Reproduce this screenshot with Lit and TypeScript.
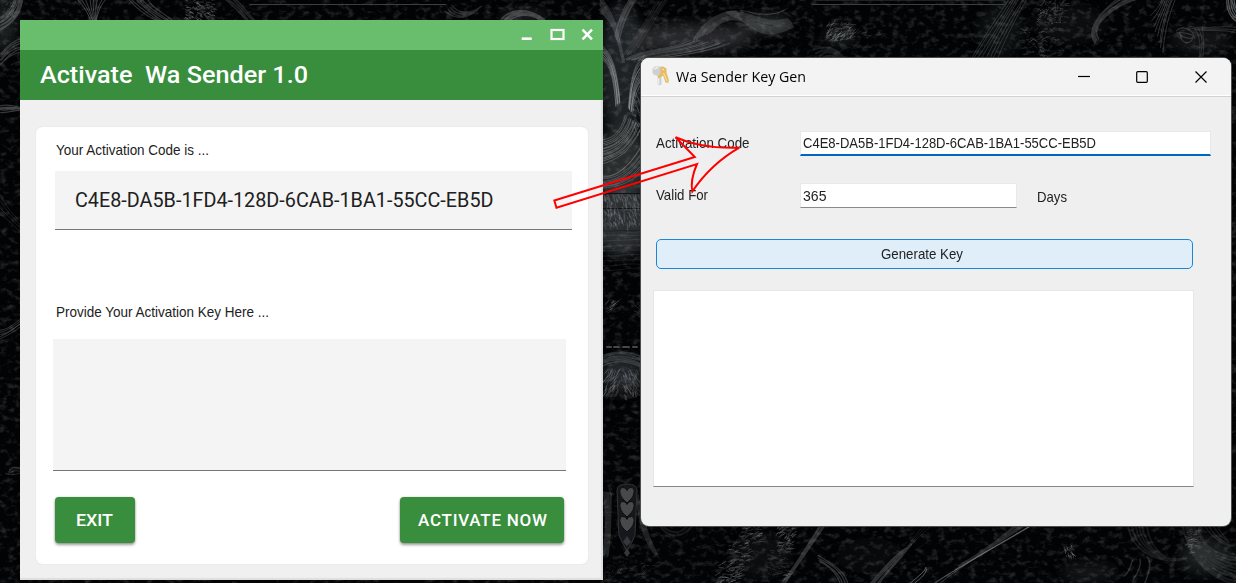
import { LitElement, html, svg, css } from "lit";
import { customElement, property } from "lit/decorators.js";

type Curve = number[];
interface Bundle { a: Curve; b: Curve; n: number; w: number; o: number; }
interface Tuft { x: number; y: number; w: number; h: number; n: number; angle: number; spread: number; len: number; o: number; }

const bundles: Bundle[] = [
  { a: [0, 30, 14, 24, 22, 12, 23, -4], b: [0, 18, 8, 14, 14, 6, 15, -4], n: 8, w: 1.2, o: 0.3 },
  { a: [0, 54, 8, 44, 14, 40, 22, 38], b: [0, 66, 8, 56, 14, 54, 22, 52], n: 6, w: 1.3, o: 0.26 },
  { a: [0, 106, 8, 104, 14, 105, 22, 107], b: [0, 112, 8, 112, 14, 110, 22, 110], n: 5, w: 1.2, o: 0.3 },
  { a: [0, 195, 8, 210, 14, 216, 22, 222], b: [0, 214, 8, 220, 14, 226, 22, 234], n: 4, w: 1, o: 0.14 },
  { a: [0, 330, 8, 330, 14, 324, 22, 318], b: [0, 338, 8, 336, 14, 332, 22, 326], n: 5, w: 1, o: 0.26 },
  { a: [8, 472, 10, 466, 16, 466, 22, 470], b: [6, 474, 12, 476, 16, 474, 22, 473], n: 3, w: 1, o: 0.22 },
  { a: [76, -2, 82, 4, 88, 12, 92, 22], b: [108, -2, 100, 5, 98, 10, 96, 22], n: 8, w: 0.8, o: 0.42 },
  { a: [126, -2, 136, 6, 142, 14, 158, 22], b: [146, -2, 150, 8, 162, 12, 174, 22], n: 6, w: 1.2, o: 0.26 },
  { a: [222, -2, 232, 4, 240, 14, 248, 22], b: [234, -2, 244, 6, 248, 14, 256, 22], n: 4, w: 1.6, o: 0.18 },
  { a: [446, 12, 456, 20, 468, 18, 476, 10], b: [452, 6, 460, 16, 472, 14, 482, 6], n: 4, w: 1.4, o: 0.2 },
  { a: [502, 20, 512, 8, 528, 8, 544, 20], b: [508, 20, 518, 13, 528, 13, 540, 20], n: 5, w: 1.6, o: 0.3 },
  { a: [600, 12, 610, 22, 616, 28, 622, 62], b: [600, -4, 612, 10, 618, 26, 624, 62], n: 9, w: 1.2, o: 0.2 },
  { a: [630, -2, 622, 10, 617, 24, 614, 36], b: [637, -2, 628, 12, 622, 24, 618, 42], n: 6, w: 1.1, o: 0.26 },
  { a: [600, 44, 612, 52, 618, 70, 620, 102], b: [600, 58, 608, 60, 614, 76, 616, 106], n: 11, w: 1, o: 0.3 },
  { a: [644, 56, 634, 64, 630, 80, 628, 108], b: [644, 80, 638, 86, 634, 94, 632, 112], n: 11, w: 1, o: 0.33 },
  { a: [600, 164, 620, 160, 634, 148, 643, 126], b: [600, 140, 614, 140, 622, 130, 626, 116], n: 13, w: 0.9, o: 0.36 },
  { a: [600, 176, 618, 178, 632, 162, 643, 142], b: [600, 189, 620, 188, 632, 182, 643, 170], n: 9, w: 0.9, o: 0.32 },
  { a: [600, 232, 612, 228, 630, 234, 643, 230], b: [600, 270, 614, 274, 630, 264, 643, 270], n: 9, w: 1.2, o: 0.1 },
  { a: [603, 356, 614, 350, 630, 352, 643, 357], b: [603, 366, 614, 359, 630, 361, 643, 368], n: 6, w: 1.7, o: 0.22 },
  { a: [604, 492, 606, 510, 606, 532, 602, 554], b: [612, 494, 611, 514, 611, 532, 607, 555], n: 6, w: 1.6, o: 0.18 },
  { a: [636, 492, 636, 514, 642, 540, 654, 554], b: [644, 510, 644, 524, 650, 540, 658, 554], n: 6, w: 1.5, o: 0.17 },
  { a: [694, 40, 702, 24, 716, 12, 736, 12], b: [712, 30, 718, 22, 730, 17, 742, 20], n: 8, w: 1.8, o: 0.2 },
  { a: [726, 12, 750, 10, 762, 26, 788, 20], b: [736, 17, 754, 26, 762, 42, 792, 26], n: 8, w: 2.2, o: 0.18 },
  { a: [742, 11, 756, 14, 776, 16, 786, 9], b: [748, 12, 760, 18, 780, 15, 788, 8], n: 2, w: 1, o: 0.18 },
  { a: [624, 60, 644, 48, 670, 50, 690, 40], b: [644, 60, 672, 56, 704, 54, 728, 44], n: 13, w: 0.9, o: 0.24 },
  { a: [622, 56, 636, 36, 646, 24, 656, 4], b: [634, 52, 646, 36, 654, 18, 668, 0], n: 6, w: 1.1, o: 0.13 },
  { a: [814, 50, 830, 44, 838, 50, 844, 58], b: [822, 58, 828, 52, 836, 56, 840, 60], n: 4, w: 2, o: 0.14 },
  { a: [970, 60, 984, 36, 1000, 14, 1010, -2], b: [996, 60, 1004, 42, 1014, 20, 1028, -2], n: 8, w: 1, o: 0.22 },
  { a: [1094, 44, 1086, 30, 1096, 14, 1120, -2], b: [1099, 38, 1090, 26, 1112, 6, 1140, -2], n: 6, w: 1.2, o: 0.24 },
  { a: [1150, 16, 1156, 10, 1160, 6, 1162, -2], b: [1163, 52, 1164, 32, 1168, 14, 1176, -2], n: 8, w: 0.8, o: 0.32 },
  { a: [1176, 30, 1182, 24, 1194, 30, 1194, 38], b: [1180, 36, 1182, 46, 1194, 44, 1192, 36], n: 4, w: 1.2, o: 0.22 },
  { a: [1190, 27, 1204, 30, 1210, 26, 1236, 28], b: [1194, 30, 1206, 32, 1216, 28, 1236, 32], n: 3, w: 1.2, o: 0.2 },
  { a: [1198, 60, 1202, 44, 1200, 36, 1196, 28], b: [1202, 60, 1204, 46, 1204, 34, 1202, 28], n: 3, w: 1, o: 0.18 },
  { a: [1226, 0, 1227, 10, 1230, 18, 1238, 22], b: [1234, -2, 1234, 6, 1236, 10, 1240, 14], n: 5, w: 1.3, o: 0.44 },
  { a: [664, 526, 672, 534, 680, 534, 688, 524], b: [658, 524, 666, 540, 684, 540, 694, 524], n: 4, w: 1.1, o: 0.12 },
  { a: [786, 584, 800, 562, 812, 546, 826, 524], b: [782, 584, 796, 564, 808, 544, 820, 524], n: 4, w: 1.3, o: 0.26 },
  { a: [820, 562, 832, 568, 838, 576, 840, 586], b: [818, 556, 836, 566, 846, 572, 848, 586], n: 4, w: 1.2, o: 0.26 },
  { a: [868, 586, 886, 564, 898, 552, 908, 546], b: [878, 586, 892, 566, 906, 554, 912, 544], n: 5, w: 1.4, o: 0.25 },
  { a: [908, 546, 914, 538, 918, 532, 924, 524], b: [912, 544, 920, 536, 926, 530, 934, 524], n: 3, w: 1, o: 0.12 },
  { a: [930, 586, 962, 564, 1000, 544, 1034, 524], b: [940, 582, 970, 560, 1004, 542, 1032, 524], n: 3, w: 1, o: 0.3 },
  { a: [956, 570, 976, 558, 1000, 540, 1026, 524], b: [962, 564, 978, 556, 1000, 538, 1018, 524], n: 4, w: 1.6, o: 0.2 },
  { a: [926, 568, 924, 574, 916, 578, 908, 586], b: [927, 569, 925, 576, 918, 580, 911, 586], n: 2, w: 0.9, o: 0.55 },
  { a: [1128, 524, 1132, 554, 1160, 564, 1186, 558], b: [1146, 524, 1148, 544, 1160, 560, 1180, 560], n: 6, w: 1.8, o: 0.12 },
  { a: [1183, 524, 1188, 556, 1206, 578, 1240, 586], b: [1200, 524, 1198, 546, 1218, 556, 1240, 558], n: 9, w: 2.2, o: 0.12 },
  { a: [1204, 524, 1208, 534, 1220, 544, 1230, 546], b: [1218, 524, 1218, 532, 1226, 536, 1228, 542], n: 4, w: 1.2, o: 0.14 },
  { a: [1144, 584, 1150, 570, 1152, 562, 1148, 558], b: [1124, 576, 1130, 572, 1130, 564, 1133, 560], n: 3, w: 1.5, o: 0.22 },
];

const tufts: Tuft[] = [
  { x: 184, y: 0, w: 30, h: 20, n: 90, angle: 20, spread: 60, len: 3, o: 0.38 },
  { x: 2, y: 4, w: 12, h: 14, n: 28, angle: -40, spread: 50, len: 2, o: 0.3 },
  { x: 603, y: 194, w: 40, h: 30, n: 130, angle: 76, spread: 34, len: 5, o: 0.3 },
  { x: 632, y: 92, w: 9, h: 40, n: 40, angle: 66, spread: 50, len: 4, o: 0.3 },
  { x: 605, y: 300, w: 10, h: 14, n: 18, angle: -38, spread: 30, len: 6, o: 0.26 },
  { x: 634, y: 300, w: 9, h: 16, n: 18, angle: 42, spread: 30, len: 6, o: 0.26 },
  { x: 605, y: 368, w: 16, h: 24, n: 50, angle: 122, spread: 36, len: 6, o: 0.3 },
  { x: 621, y: 368, w: 20, h: 28, n: 54, angle: 68, spread: 36, len: 6, o: 0.3 },
  { x: 826, y: 24, w: 26, h: 18, n: 80, angle: -32, spread: 70, len: 4.5, o: 0.32 },
  { x: 850, y: 26, w: 32, h: 12, n: 16, angle: -20, spread: 60, len: 4, o: 0.22 },
  { x: 1036, y: 2, w: 30, h: 22, n: 80, angle: -30, spread: 120, len: 3.5, o: 0.28 },
  { x: 1020, y: 28, w: 42, h: 28, n: 80, angle: -10, spread: 110, len: 3.5, o: 0.26 },
  { x: 740, y: 526, w: 20, h: 18, n: 34, angle: -12, spread: 40, len: 4, o: 0.32 },
  { x: 728, y: 542, w: 22, h: 20, n: 40, angle: -12, spread: 50, len: 4, o: 0.34 },
  { x: 714, y: 562, w: 26, h: 22, n: 56, angle: -12, spread: 50, len: 4, o: 0.38 },
  { x: 776, y: 526, w: 18, h: 24, n: 60, angle: -20, spread: 90, len: 4, o: 0.34 },
  { x: 766, y: 546, w: 22, h: 36, n: 46, angle: 6, spread: 50, len: 4, o: 0.24 },
  { x: 1064, y: 544, w: 10, h: 12, n: 26, angle: 70, spread: 60, len: 3, o: 0.36 },
  { x: 1184, y: 530, w: 14, h: 24, n: 44, angle: -12, spread: 50, len: 3.5, o: 0.28 },
  { x: 603, y: 562, w: 50, h: 20, n: 70, angle: -20, spread: 100, len: 4, o: 0.14 },
];

let seed = 7;
const rnd = () => (seed = (seed * 16807) % 2147483647) / 2147483647;

const bundlePath = ({ a, b, n }: Bundle) =>
  Array.from({ length: n }, (_, i) => {
    const t = n > 1 ? i / (n - 1) : 0;
    const p = a.map((v, k) => (v + (b[k] - v) * t + (rnd() - 0.5) * 1.8).toFixed(1));
    return `M${p[0]} ${p[1]}C${p.slice(2).join(" ")}`;
  }).join("");

const tuftPath = (t: Tuft) =>
  Array.from({ length: t.n }, () => {
    const x = t.x + rnd() * t.w;
    const y = t.y + rnd() * t.h;
    const r = ((t.angle + (rnd() - 0.5) * t.spread) * Math.PI) / 180;
    const l = t.len * (0.4 + rnd());
    return `M${x.toFixed(1)} ${y.toFixed(1)}q${(Math.cos(r) * l * 0.5 + 0.6).toFixed(1)} ${(Math.sin(r) * l * 0.5 - 0.6).toFixed(1)} ${(Math.cos(r) * l).toFixed(1)} ${(Math.sin(r) * l).toFixed(1)}`;
  }).join("");

@customElement("desk-wallpaper")
class DeskWallpaper extends LitElement {
  static styles = css`
    :host { display: block; }
    svg { display: block; }
  `;
  render() {
    return html`<svg width="1236" height="583" viewBox="0 0 1236 583" fill="none" stroke-linecap="round">
      <defs>
        <filter id="soft" x="-30%" y="-30%" width="160%" height="160%"><feGaussianBlur stdDeviation="6" /></filter>
        <filter id="strand" filterUnits="userSpaceOnUse" x="0" y="0" width="1236" height="583"><feGaussianBlur stdDeviation="0.550" /></filter>
        <filter id="grain" filterUnits="userSpaceOnUse" x="0" y="0" width="1236" height="583" color-interpolation-filters="sRGB">
          <feTurbulence type="fractalNoise" baseFrequency="0.130 0.180" numOctaves="4" seed="5" />
          <feColorMatrix values="0 0 0 0 0.600  0 0 0 0 0.620  0 0 0 0 0.640  1.600 0 0 0 -0.780" />
        </filter>
      </defs>
      <rect width="1236" height="583" fill="#020304" />
      <g fill="#34373a" filter="url(#soft)">
        <ellipse cx="622" cy="70" rx="22" ry="66" opacity=".6" />
        <ellipse cx="622" cy="165" rx="26" ry="38" opacity=".8" />
        <ellipse cx="622" cy="220" rx="26" ry="36" opacity=".85" />
        <ellipse cx="622" cy="375" rx="20" ry="18" opacity=".7" />
        <ellipse cx="690" cy="38" rx="62" ry="14" opacity=".75" />
        <ellipse cx="764" cy="24" rx="26" ry="8" opacity=".8" />
        <ellipse cx="840" cy="36" rx="16" ry="9" opacity=".5" />
        <ellipse cx="1000" cy="30" rx="22" ry="26" opacity=".25" />
        <ellipse cx="1070" cy="24" rx="36" ry="18" opacity=".2" />
        <ellipse cx="1200" cy="40" rx="30" ry="14" opacity=".3" />
        <ellipse cx="1206" cy="556" rx="26" ry="18" opacity=".5" />
        <ellipse cx="1088" cy="572" rx="28" ry="10" opacity=".35" />
        <ellipse cx="870" cy="556" rx="34" ry="18" opacity=".14" />
        <ellipse cx="760" cy="556" rx="30" ry="22" opacity=".2" />
        <ellipse cx="4" cy="26" rx="12" ry="26" opacity=".5" />
        <ellipse cx="524" cy="16" rx="24" ry="6" opacity=".6" />
      </g>
      <rect width="1236" height="583" filter="url(#grain)" opacity=".4" />
      <path d="M250 4.500H446M812 4.500H1004M814 0H1002" stroke="#3c3e40" stroke-width="1" />
      <path d="M603 193.500H643M603 208.500H643M603 231H643" stroke="#101214" stroke-width="1.200" />
      <g filter="url(#strand)">
        ${bundles.map((b) => svg`<path d=${bundlePath(b)} stroke="#aeb3b7" stroke-width=${b.w} stroke-opacity=${b.o} />`)}
        <path d="M607 311h4M614 311h5M623 311h6M633 311h4" stroke="#45484a" stroke-width="2" transform="translate(0 36)" />
        <path d="M617 490q0-6 10-6t10 6l-2 45q-3 8-8 16q-5-8-8-16z" fill="#17191b" stroke="#303335" />
        ${[490, 504, 519].map((y) => svg`<path d=${`M627 ${y}c-4-5-8-2-7 3s4 7 7 10c3-3 6-5 7-10s-3-8-7-3z`} fill="#46494b" stroke="#0c0d0e" />`)}
        <path d="M627 536l-4 6 4 4 4-4zM627 548l-3 5 3 4 3-4z" fill="#35383a" />
      </g>
      ${tufts.map((t) => svg`<path d=${tuftPath(t)} stroke="#b4b8bc" stroke-width="0.700" stroke-opacity=${t.o} />`)}
    </svg>`;
  }
}

/* One line of text set to a given width, with its baseline at a given depth. */
@customElement("fit-text")
class FitText extends LitElement {
  @property() text = "";
  @property() adjust = "spacingAndGlyphs";
  @property({ type: Number }) width = 100;
  @property({ type: Number }) height = 20;
  @property({ type: Number }) base = 15;
  static styles = css`
    :host { display: block; flex: none; }
    svg { display: block; overflow: visible; }
    text { white-space: pre; fill: currentColor; }
  `;
  render() {
    return html`<svg width=${this.width} height=${this.height}>
      <text x="0" y=${this.base} textLength=${this.width} lengthAdjust=${this.adjust}>${this.text}</text>
    </svg>`;
  }
}

const CODE = "C4E8-DA5B-1FD4-128D-6CAB-1BA1-55CC-EB5D";

@customElement("activate-window")
class ActivateWindow extends LitElement {
  static styles = css`
    :host { display: flex; flex-direction: column; box-sizing: border-box; width: 583px; height: 560px; background: #f0f0f0; font-family: Roboto, sans-serif; box-shadow: inset -2px -2px 1px #dedede; }
    .bar { height: 30px; flex: none; background: #68be6c; display: flex; justify-content: flex-end; }
    .head { height: 50px; flex: none; background: #398e3d; color: #fff; padding-left: 20px; font-size: 24px; font-weight: 500; }
    .card { display: flex; flex-direction: column; box-sizing: border-box; width: 552px; height: 437px; margin: 27px 0 0 16px; padding: 12px 16px 0; background: #fff; border-radius: 6px; box-shadow: 0 0 1px #ccc; }
    .label { font: 14.5px "Liberation Sans", Arial, sans-serif; color: #222; margin-left: 4px; }
    .field { box-sizing: border-box; background: #f4f4f4; border-bottom: 1.500px solid #777; }
    .code { width: 517px; height: 59px; margin: 12px 0 70px 3px; padding-left: 20px; font-size: 21px; color: #202020; }
    .key { width: 513px; height: 132px; margin: 19px 0 0 0.700px; }
    .row { display: flex; justify-content: space-between; width: 509px; margin: 26px 0 0 3px; }
    .btn { box-sizing: border-box; height: 45.500px; border-radius: 4px; background: #398e3d; color: #fff; font-weight: 500; font-size: 17px; box-shadow: 0 2px 3px rgba(0,0,0,.38), 0 0 2px rgba(0,0,0,.2); }
    .exit { width: 80px; padding-left: 21px; }
    .now { width: 164px; padding-left: 17.500px; }
  `;
  render() {
    return html`
      <div class="bar"><svg width="90" height="30" fill="none" stroke="#fff">
        <path d="M8.700 18.700h10" stroke-width="2.600" /><rect x="38.500" y="10" width="12" height="9" stroke-width="2.200" />
        <path d="M69.500 9.700l9.500 9.600M79 9.700l-9.500 9.600" stroke-width="2.500" /></svg></div>
      <div class="head"><fit-text text="Activate  Wa Sender 1.0" width="268" height="50" base="33"></fit-text></div>
      <div class="card">
        <fit-text class="label" text="Your Activation Code is ..." width="153" height="20" base="16"></fit-text>
        <div class="field code"><fit-text text=${CODE} width="418.500" height="57" base="36"></fit-text></div>
        <fit-text class="label" text="Provide Your Activation Key Here ..." width="213" height="20" base="17"></fit-text>
        <div class="field key"></div>
        <div class="row">
          <div class="btn exit"><fit-text text="EXIT" width="37" height="45" base="29"></fit-text></div>
          <div class="btn now"><fit-text text="ACTIVATE NOW" adjust="spacing" width="129" height="45" base="29"></fit-text></div>
        </div>
      </div>`;
  }
}

@customElement("keygen-window")
class KeygenWindow extends LitElement {
  static styles = css`
    :host { display: flex; flex-direction: column; box-sizing: border-box; width: 590px; height: 467.500px; background: #efefef; border-radius: 8px; overflow: hidden; font: 14.5px "Liberation Sans", Arial, sans-serif; color: #222; box-shadow: 0 0 0 1px #4a4e4f; }
    .title { display: flex; box-sizing: border-box; height: 39px; flex: none; background: #f3f3f3; border-bottom: 1px solid #d2d2d2; box-shadow: inset 0 -1px #fff; padding-left: 10px; }
    .name { font: 15px "Open Sans", "Noto Sans", sans-serif; color: #000; margin-left: 7px; flex: 1; }
    .form { display: grid; grid-template-columns: 144.500px 217px auto; padding: 34px 0 0 14.500px; grid-template-rows: 25px 27px 25px; }
    .input { box-sizing: border-box; background: #fff; border: 1px solid #e8e8e8; padding-left: 2px; height: 25px; }
    .code { grid-column: span 2; width: 411px; border-bottom: 2px solid #0067c0; }
    .days { grid-row: 3; width: 217px; border-bottom: 1px solid #8a8a8a; }
    .valid, .unit { grid-row: 3; }
    .unit { margin-left: 20px; }
    .gen { box-sizing: border-box; width: 537px; height: 30px; margin: 31px 0 0 14.500px; border: 1.500px solid #1a86d9; border-radius: 5px; background: #e0eef9; display: flex; justify-content: center; padding-right: 4px; }
    .out { box-sizing: border-box; width: 541px; height: 197px; margin: 20.500px 0 0 12px; background: #fff; border: 1px solid #e6e6e6; border-bottom: 1px solid #868686; }
  `;
  render() {
    return html`
      <div class="title">
        <svg width="18" height="38" fill="none">
          <path d="M1.500 11l2-2.500h8l2 2v5l-2 2.500h-1v8.500l-2 .7-2-1.200v-8l-4-1.500-1-2z" fill="#cdd0d2" />
          <path d="M3 11l4-1.500M7.500 18v8" stroke="#eceeef" stroke-width="1.500" />
          <path d="M9 10l3-1.500 3.500 2v4l2.500 8-1 2.500-2.500-.5-2.500-7-4 3-1.500-1.500 3-4z" fill="#e5bd66" />
          <path d="M11 11.500h2M12.500 15l3.500 8" stroke="#fae5af" />
        </svg>
        <fit-text class="name" text="Wa Sender Key Gen" width="130" height="38" base="24"></fit-text>
        <svg width="160" height="38" fill="none" stroke="#000" stroke-width="1.200">
          <path d="M7 18.500h12" /><rect x="65.700" y="13.700" width="10.600" height="10.600" rx="1" />
          <path d="M124.500 13.500l11 11M135.500 13.500l-11 11" /></svg>
      </div>
      <div class="form">
        <fit-text text="Activation Code" width="93.500" height="25" base="17"></fit-text>
        <div class="input code"><fit-text text=${CODE} width="293" height="22" base="15.500"></fit-text></div>
        <fit-text class="valid" text="Valid For" width="52" height="25" base="16.500"></fit-text>
        <div class="input days"><fit-text text="365" width="23.500" height="22" base="16.500"></fit-text></div>
        <fit-text class="unit" text="Days" width="30" height="25" base="19"></fit-text>
      </div>
      <div class="gen"><fit-text text="Generate Key" width="82" height="26" base="19"></fit-text></div>
      <div class="out"></div>`;
  }
}

@customElement("app-root")
class AppRoot extends LitElement {
  static styles = css`
    :host { display: block; position: relative; width: 1236px; height: 583px; overflow: hidden; background: #030405; }
    .left { position: absolute; left: 20px; top: 20px; }
    .right { position: absolute; left: 641px; top: 58px; }
    .arrow { position: absolute; left: 0; top: 0; }
  `;
  render() {
    return html`
      <desk-wallpaper></desk-wallpaper>
      <activate-window class="left"></activate-window>
      <keygen-window class="right"></keygen-window>
      <svg class="arrow" width="1236" height="583" fill="none" stroke="#ff0000" stroke-width="2">
        <path d="M554.300 200.500L694.800 157 675.500 137.200Q701 149 739.300 147.700Q711 164 692.300 191.500Q690 180 697 164L556.500 207.800Z" />
      </svg>`;
  }
}
